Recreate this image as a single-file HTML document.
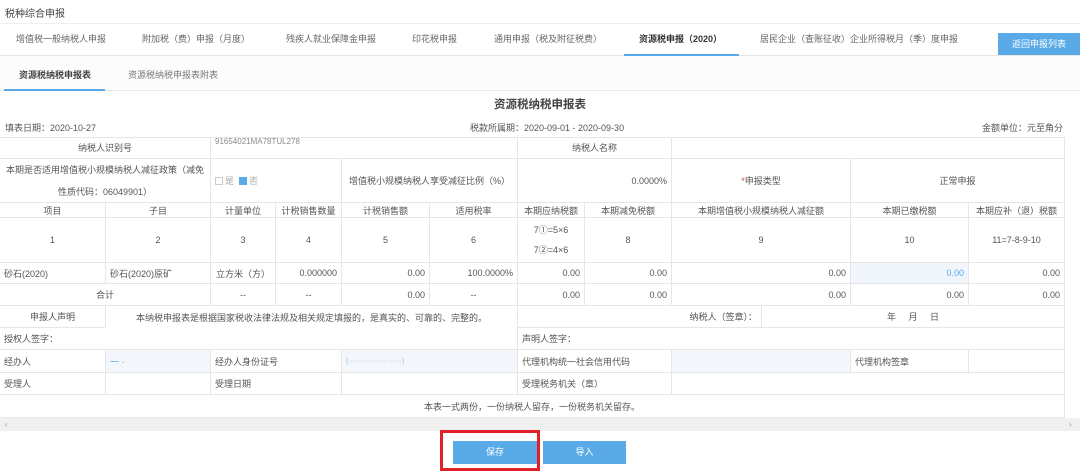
<!DOCTYPE html>
<html><head><meta charset="utf-8">
<style>
*{margin:0;padding:0;box-sizing:border-box}
body{width:1080px;height:474px;overflow:hidden;background:#fff;font-family:"Liberation Sans","Noto Sans CJK SC",sans-serif;font-size:9px;color:#555;position:relative}
.a{position:absolute}
.c{position:absolute;border-right:1px solid #e6e6e6;border-bottom:1px solid #e6e6e6;display:flex;align-items:center;justify-content:center;padding:0 4px;white-space:nowrap;overflow:hidden}
.l{justify-content:flex-start}
.r{justify-content:flex-end}
.tab{position:absolute;top:23px;height:32px;line-height:32px;font-size:9px;color:#666}
.btn{position:absolute;background:#5aaae8;color:#fff;text-align:center;font-size:9px}
</style></head><body>
<div class="a" style="left:5px;top:5px;font-size:10px;color:#444">税种综合申报</div>
<div class="a" style="left:0;top:23px;width:1080px;height:1px;background:#eee"></div>
<div class="a" style="left:0;top:55px;width:1080px;height:1px;background:#e6e6e6"></div>
<div class="tab" style="left:16px">增值税一般纳税人申报</div>
<div class="tab" style="left:142px">附加税（费）申报（月度）</div>
<div class="tab" style="left:286px">残疾人就业保障金申报</div>
<div class="tab" style="left:412px">印花税申报</div>
<div class="tab" style="left:494px">通用申报（税及附征税费）</div>
<div class="tab" style="left:639px;color:#333;font-weight:bold">资源税申报（2020）</div>
<div class="a" style="left:624px;top:54px;width:115px;height:2px;background:#5aaae8"></div>
<div class="tab" style="left:760px">居民企业（查账征收）企业所得税月（季）度申报</div>
<div class="btn" style="left:998px;top:33px;width:82px;height:22px;line-height:22px">返回申报列表</div>
<div class="a" style="left:0;top:56px;width:1080px;height:34px;background:#fcfcfc"></div>
<div class="a" style="left:0;top:90px;width:1080px;height:1px;background:#e6e6e6"></div>
<div class="a" style="left:19px;top:68px;font-weight:bold;color:#444">资源税纳税申报表</div>
<div class="a" style="left:128px;top:68px;color:#777">资源税纳税申报表附表</div>
<div class="a" style="left:4px;top:89px;width:101px;height:2px;background:#5aaae8"></div>
<div class="a" style="left:0;top:96px;width:1080px;text-align:center;font-size:11.5px;font-weight:bold;color:#444">资源税纳税申报表</div>
<div class="a" style="left:5px;top:121px">填表日期：2020-10-27</div>
<div class="a" style="left:470px;top:121px">税款所属期：2020-09-01 - 2020-09-30</div>
<div class="a" style="left:982px;top:121px">金额单位：元至角分</div>
<div class="a" style="left:0;top:137px;width:1065px;height:1px;background:#e6e6e6"></div>
<!-- row1 -->
<div class="c" style="left:0;top:137px;width:211px;height:22px">纳税人识别号</div>
<div class="c l" style="left:211px;top:137px;width:307px;height:22px;color:#888;font-size:8px;align-items:flex-start">91654021MA78TUL278</div>
<div class="c" style="left:518px;top:137px;width:154px;height:22px">纳税人名称</div>
<div class="c" style="left:672px;top:137px;width:393px;height:22px"></div>
<!-- row2 -->
<div class="c" style="left:0;top:159px;width:211px;height:44px;white-space:normal;text-align:center;line-height:22px">本期是否适用增值税小规模纳税人减征政策（减免性质代码：06049901）</div>
<div class="c l" style="left:211px;top:159px;width:131px;height:44px;color:#aaa"><span style="display:inline-block;width:8px;height:8px;border:1px solid #ccc;margin-right:2px"></span>是 <span style="display:inline-block;width:8px;height:8px;background:#5aaae8;margin:0 2px 0 5px"></span>否</div>
<div class="c" style="left:342px;top:159px;width:176px;height:44px">增值税小规模纳税人享受减征比例（%）</div>
<div class="c r" style="left:518px;top:159px;width:154px;height:44px">0.0000%</div>
<div class="c" style="left:672px;top:159px;width:179px;height:44px"><span style="color:#e33">*</span>申报类型</div>
<div class="c" style="left:851px;top:159px;width:214px;height:44px">正常申报</div>
<!-- header -->
<div class="c" style="left:0;top:203px;width:106px;height:15px">项目</div>
<div class="c" style="left:106px;top:203px;width:105px;height:15px">子目</div>
<div class="c" style="left:211px;top:203px;width:65px;height:15px">计量单位</div>
<div class="c" style="left:276px;top:203px;width:66px;height:15px">计税销售数量</div>
<div class="c" style="left:342px;top:203px;width:88px;height:15px">计税销售额</div>
<div class="c" style="left:430px;top:203px;width:88px;height:15px">适用税率</div>
<div class="c" style="left:518px;top:203px;width:67px;height:15px">本期应纳税额</div>
<div class="c" style="left:585px;top:203px;width:87px;height:15px">本期减免税额</div>
<div class="c" style="left:672px;top:203px;width:179px;height:15px">本期增值税小规模纳税人减征额</div>
<div class="c" style="left:851px;top:203px;width:118px;height:15px">本期已缴税额</div>
<div class="c" style="left:969px;top:203px;width:96px;height:15px">本期应补（退）税额</div>
<!-- numbers -->
<div class="c" style="left:0;top:218px;width:106px;height:45px">1</div>
<div class="c" style="left:106px;top:218px;width:105px;height:45px">2</div>
<div class="c" style="left:211px;top:218px;width:65px;height:45px">3</div>
<div class="c" style="left:276px;top:218px;width:66px;height:45px">4</div>
<div class="c" style="left:342px;top:218px;width:88px;height:45px">5</div>
<div class="c" style="left:430px;top:218px;width:88px;height:45px">6</div>
<div class="c" style="left:518px;top:218px;width:67px;height:45px;flex-direction:column;line-height:20px">7①=5×6<br>7②=4×6</div>
<div class="c" style="left:585px;top:218px;width:87px;height:45px">8</div>
<div class="c" style="left:672px;top:218px;width:179px;height:45px">9</div>
<div class="c" style="left:851px;top:218px;width:118px;height:45px">10</div>
<div class="c" style="left:969px;top:218px;width:96px;height:45px">11=7-8-9-10</div>
<!-- data -->
<div class="c l" style="left:0;top:263px;width:106px;height:21px">砂石(2020)</div>
<div class="c l" style="left:106px;top:263px;width:105px;height:21px">砂石(2020)原矿</div>
<div class="c" style="left:211px;top:263px;width:65px;height:21px">立方米（方）</div>
<div class="c r" style="left:276px;top:263px;width:66px;height:21px">0.000000</div>
<div class="c r" style="left:342px;top:263px;width:88px;height:21px">0.00</div>
<div class="c r" style="left:430px;top:263px;width:88px;height:21px">100.0000%</div>
<div class="c r" style="left:518px;top:263px;width:67px;height:21px">0.00</div>
<div class="c r" style="left:585px;top:263px;width:87px;height:21px">0.00</div>
<div class="c r" style="left:672px;top:263px;width:179px;height:21px">0.00</div>
<div class="c r" style="left:851px;top:263px;width:118px;height:21px;background:#f0f6fc;color:#5aaae8">0.00</div>
<div class="c r" style="left:969px;top:263px;width:96px;height:21px">0.00</div>
<!-- total -->
<div class="c" style="left:0;top:284px;width:211px;height:22px">合计</div>
<div class="c" style="left:211px;top:284px;width:65px;height:22px">--</div>
<div class="c" style="left:276px;top:284px;width:66px;height:22px">--</div>
<div class="c r" style="left:342px;top:284px;width:88px;height:22px">0.00</div>
<div class="c" style="left:430px;top:284px;width:88px;height:22px">--</div>
<div class="c r" style="left:518px;top:284px;width:67px;height:22px">0.00</div>
<div class="c r" style="left:585px;top:284px;width:87px;height:22px">0.00</div>
<div class="c r" style="left:672px;top:284px;width:179px;height:22px">0.00</div>
<div class="c r" style="left:851px;top:284px;width:118px;height:22px">0.00</div>
<div class="c r" style="left:969px;top:284px;width:96px;height:22px">0.00</div>
<!-- declaration -->
<div class="c" style="left:0;top:306px;width:106px;height:22px">申报人声明</div>
<div class="c" style="left:106px;top:306px;width:412px;height:22px;border-bottom:none">本纳税申报表是根据国家税收法律法规及相关规定填报的，是真实的、可靠的、完整的。</div>
<div class="c r" style="left:518px;top:306px;width:244px;height:22px">纳税人（签章）：</div>
<div class="c" style="left:762px;top:306px;width:303px;height:22px;word-spacing:10px">年 月 日</div>
<div class="c l" style="left:0;top:328px;width:518px;height:22px">授权人签字：</div>
<div class="c l" style="left:518px;top:328px;width:547px;height:22px">声明人签字：</div>
<div class="c l" style="left:0;top:350px;width:106px;height:23px">经办人</div>
<div class="c l" style="left:106px;top:350px;width:105px;height:23px;background:#f3f7fb;color:#5aaae8">一 ·</div>
<div class="c l" style="left:211px;top:350px;width:131px;height:23px">经办人身份证号</div>
<div class="c l" style="left:342px;top:350px;width:176px;height:23px;background:#f3f7fb;color:#9bc;font-size:7px">(·······················)</div>
<div class="c l" style="left:518px;top:350px;width:154px;height:23px">代理机构统一社会信用代码</div>
<div class="c" style="left:672px;top:350px;width:179px;height:23px;background:#f3f7fb"></div>
<div class="c l" style="left:851px;top:350px;width:118px;height:23px">代理机构签章</div>
<div class="c" style="left:969px;top:350px;width:96px;height:23px"></div>
<div class="c l" style="left:0;top:373px;width:106px;height:22px">受理人</div>
<div class="c" style="left:106px;top:373px;width:105px;height:22px"></div>
<div class="c l" style="left:211px;top:373px;width:131px;height:22px">受理日期</div>
<div class="c" style="left:342px;top:373px;width:176px;height:22px"></div>
<div class="c l" style="left:518px;top:373px;width:154px;height:22px">受理税务机关（章）</div>
<div class="c" style="left:672px;top:373px;width:393px;height:22px"></div>
<div class="c" style="left:0;top:395px;width:1065px;height:23px">本表一式两份，一份纳税人留存，一份税务机关留存。</div>
<!-- scrollbar -->
<div class="a" style="left:0;top:418px;width:1080px;height:13px;background:#f0f0f0"></div>
<div class="a" style="left:5px;top:418px;font-size:8px;color:#999;line-height:13px">‹</div>
<div class="a" style="left:1069px;top:418px;font-size:8px;color:#999;line-height:13px">›</div>
<!-- buttons -->
<div class="btn" style="left:453px;top:441px;width:84px;height:23px;line-height:23px">保存</div>
<div class="btn" style="left:543px;top:441px;width:83px;height:23px;line-height:23px">导入</div>
<div class="a" style="left:440px;top:430px;width:100px;height:41px;border:3px solid #e0202a"></div>
</body></html>
